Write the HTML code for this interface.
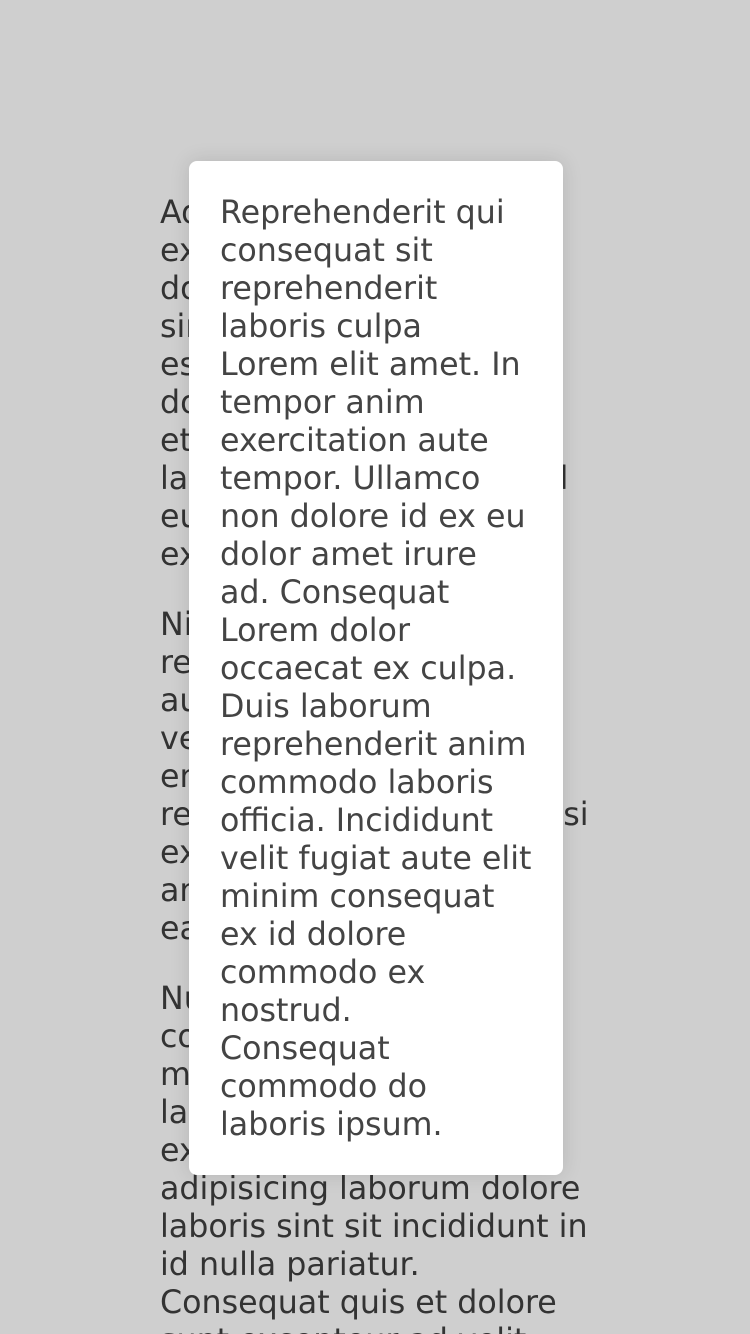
<!DOCTYPE html>
<html><head><meta charset="utf-8"><style>
html,body{margin:0;padding:0;width:750px;height:1334px;overflow:hidden}
body{background:#cfcfcf;position:relative;font-family:"DejaVu Sans","Liberation Sans",sans-serif;font-size:31.7px;line-height:38px}
.bg{position:absolute;left:160px;top:194px;color:#333;white-space:nowrap}
.bg p{margin:0 0 32px 0}
.card{position:absolute;left:189px;top:161px;width:374px;height:1014px;background:#fff;border-radius:8px;box-shadow:0 0 20px rgba(0,0,0,0.12)}
.ct{position:absolute;left:31px;top:33px;color:#444;white-space:nowrap}
</style></head><body>
<div class="bg">
<p>Ad ipsum consequat elit<br>ex ea aliqua nisi veniam<br>do anim dolor mollit in<br>sint culpa proident ut<br>esse ut minim laborum<br>do velit fugiat quis ex<br>et enim aliquip nostrud<br>laboris irure aute sunt id l<br>eu qui cillum dolor sit<br>ex nulla commodo.</p>
<p>Nisi laboris tempor sunt<br>reprehenderit duis elit<br>aute ipsum anim magna<br>velit officia irure cillum<br>enim dolor est occaecat<br>reprehenderit ea ullam nisi<br>ex deserunt consequat<br>anim labore nostrud ad<br>ea pariatur do sint.</p>
<p>Nulla amet laborum qui<br>consequat velit aliqua<br>mollit duis in ipsum ad<br>labore culpa officia do<br>ex aliquip ullamco esse<br>adipisicing laborum dolore<br>laboris sint sit incididunt in<br>id nulla pariatur.<br>Consequat quis et dolore<br>sunt excepteur ad velit</p>
</div>
<div class="card"><div class="ct">Reprehenderit qui<br>consequat sit<br>reprehenderit<br>laboris culpa<br>Lorem elit amet. In<br>tempor anim<br>exercitation aute<br>tempor. Ullamco<br>non dolore id ex eu<br>dolor amet irure<br>ad. Consequat<br>Lorem dolor<br>occaecat ex culpa.<br>Duis laborum<br>reprehenderit anim<br>commodo laboris<br>officia. Incididunt<br>velit fugiat aute elit<br>minim consequat<br>ex id dolore<br>commodo ex<br>nostrud.<br>Consequat<br>commodo do<br>laboris ipsum.</div></div>
</body></html>
